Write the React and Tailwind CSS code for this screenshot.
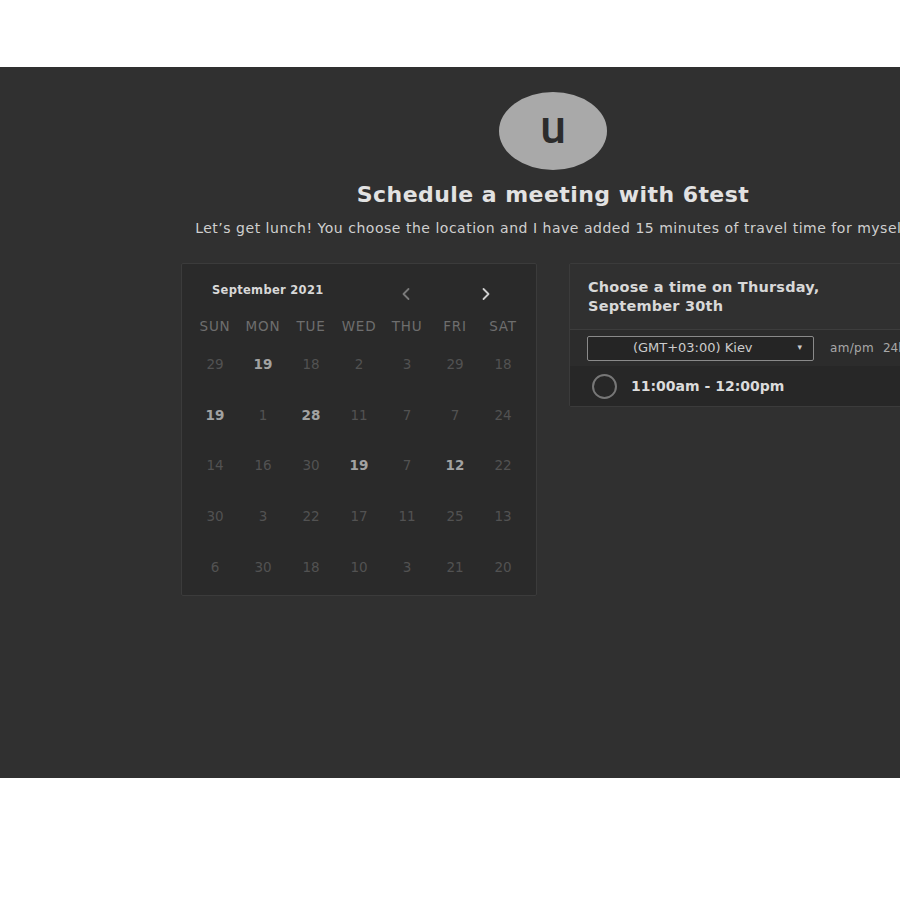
import React from 'react';

const rows = [
  [['29'], ['19', true], ['18'], ['2'], ['3'], ['29'], ['18']],
  [['19', true], ['1'], ['28', true], ['11'], ['7'], ['7'], ['24']],
  [['14'], ['16'], ['30'], ['19', true], ['7'], ['12', true], ['22']],
  [['30'], ['3'], ['22'], ['17'], ['11'], ['25'], ['13']],
  [['6'], ['30'], ['18'], ['10'], ['3'], ['21'], ['20']],
];

const days = ['SUN', 'MON', 'TUE', 'WED', 'THU', 'FRI', 'SAT'];

const Chevron = ({ dir, color }) => (
  <svg width="10" height="14" viewBox="0 0 10 14" fill="none" stroke={color} strokeWidth="1.8" strokeLinecap="round" strokeLinejoin="round">
    {dir === 'left' ? <path d="M7.5 2 L2.5 7 L7.5 12" /> : <path d="M2.5 2 L7.5 7 L2.5 12" />}
  </svg>
);

export default function App() {
  return (
    <div className="w-[900px] h-[900px] bg-white pt-[67px] overflow-hidden" style={{ fontFamily: '"DejaVu Sans", Roboto, sans-serif' }}>
      <div className="h-[711px] bg-[#303030] overflow-hidden">
        <div className="w-[1106px] flex flex-col items-center pt-[25px]">
          {/* Avatar */}
          <div className="w-[108px] h-[78px] rounded-[50%] bg-[#a9a9a9] flex items-center justify-center">
            <span className="text-[46px] leading-none font-medium text-[#2c2c2c] -mt-[8px]" style={{ fontFamily: 'Roboto, sans-serif' }}>u</span>
          </div>
          <h1 className="mt-[11px] text-[22px] leading-[28px] font-bold text-[#e2e2e2] tracking-[0.45px]">
            Schedule a meeting with 6test
          </h1>
          <p className="mt-[9px] text-[14px] leading-[20px] text-[#cfcfcf] whitespace-nowrap tracking-[0.52px]">
            Let’s get lunch! You choose the location and I have added 15 minutes of travel time for myself.
          </p>

          <div className="mt-[25px] flex gap-[32px] self-start ml-[181px]">
            {/* Calendar */}
            <div className="w-[356px] h-[333px] bg-[#2a2a2a] border border-[#3b3b3b] rounded-[2px] px-[9px] pt-[17px]">
              <div className="flex items-center h-[20px]">
                <span className="ml-[21px] text-[11.5px] font-bold text-[#d8d8d8] tracking-[0.3px]">September 2021</span>
                <span className="ml-[77px] mt-[5px]"><Chevron dir="left" color="#7a7a7a" /></span>
                <span className="ml-[70px] mt-[5px]"><Chevron dir="right" color="#cfcfcf" /></span>
              </div>
              <div className="grid grid-cols-7 w-[336px] mt-[13px]">
                {days.map((d) => (
                  <div key={d} className="h-[24px] flex items-center justify-center text-[13.5px] text-[#6e6e6e] tracking-[0.8px]">{d}</div>
                ))}
              </div>
              <div className="grid grid-cols-7 w-[336px] mt-[1px]">
                {rows.flat().map(([n, hi], i) => (
                  <div key={i} className="h-[50.6px] flex items-center justify-center">
                    <span className={hi ? 'text-[13.5px] font-bold text-[#a2a2a2]' : 'text-[13.5px] text-[#525252]'}>{n}</span>
                  </div>
                ))}
              </div>
            </div>

            {/* Time panel */}
            <div className="w-[380px] h-[144px] bg-[#2d2d2d] border border-[#3b3b3b] rounded-[2px] flex flex-col">
              <div className="h-[66px] px-[18px] pt-[14px] bg-[#303030] border-b border-[#3d3d3d]">
                <p className="text-[14.5px] leading-[19px] font-bold text-[#d8d8d8] tracking-[0.2px]">
                  Choose a time on Thursday,<br />September 30th
                </p>
              </div>
              <div className="h-[36px] flex items-center pl-[17px] bg-[#2c2c2c]">
                <div className="w-[227px] h-[25px] border border-[#8a8a8a] rounded-[2px] bg-[#252525] flex items-center">
                  <span className="flex-1 text-center text-[13px] text-[#cccccc]">(GMT+03:00) Kiev</span>
                  <span className="text-[9px] text-[#cccccc] mr-[11px]">▾</span>
                </div>
                <span className="ml-[16px] text-[12px] text-[#a8a8a8] tracking-[0.3px]">am/pm</span>
                <span className="ml-[9px] text-[12px] text-[#a8a8a8]">24h</span>
              </div>
              <div className="flex-1 flex items-center pl-[22px] bg-[#272727]">
                <div className="w-[25px] h-[25px] rounded-full border-2 border-[#777777]"></div>
                <span className="ml-[14px] text-[14px] font-bold text-[#dcdcdc]">11:00am - 12:00pm</span>
              </div>
            </div>
          </div>
        </div>
      </div>
    </div>
  );
}
